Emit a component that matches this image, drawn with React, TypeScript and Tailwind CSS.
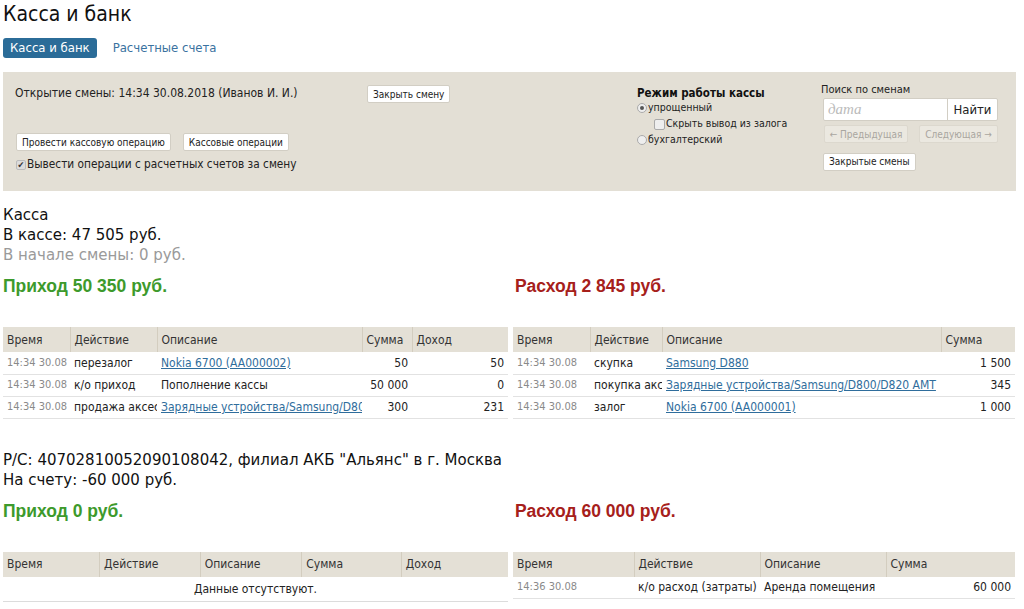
import React from "react";

const T = { fontFamily: '"DejaVu Sans Condensed", "DejaVu Sans", sans-serif' };
const V = { fontFamily: '"DejaVu Sans", Verdana, sans-serif' };
const A = { fontFamily: '"Liberation Sans", Arial, sans-serif' };

type Cell = { text: string; link?: boolean; right?: boolean; time?: boolean };

function DataTable({ widths, headers, rows, empty }: { widths: number[]; headers: string[]; rows: Cell[][]; empty?: string }) {
  return (
    <table className="table-fixed border-collapse w-full text-[12px] text-[#222]" style={T}>
      <colgroup>
        {widths.map((w, i) => (
          <col key={i} style={{ width: w }} />
        ))}
      </colgroup>
      <thead>
        <tr className="bg-[#e4e0d6] h-[25px]">
          {headers.map((h, i) => (
            <th
              key={i}
              className={`text-left font-normal px-[4px] text-[#333] whitespace-nowrap overflow-hidden ${i > 0 ? "border-l border-[#d3cdbf]" : ""}`}
            >
              {h}
            </th>
          ))}
        </tr>
      </thead>
      <tbody>
        {empty ? (
          <tr className="h-[25px] border-b border-[#dcdcdc]">
            <td colSpan={headers.length} className="text-center text-[#222]">
              {empty}
            </td>
          </tr>
        ) : (
          rows.map((r, ri) => (
            <tr key={ri} className="h-[22px] border-b border-[#e2e2e2]">
              {r.map((c, ci) => (
                <td
                  key={ci}
                  className={`px-[4px] whitespace-nowrap overflow-hidden text-clip ${c.right ? "text-right" : "text-left"} ${c.time ? "text-[11px] text-[#8a8a8a]" : ""}`}
                >
                  {c.link ? <span className="text-[#2f6d9c] underline">{c.text}</span> : c.text}
                </td>
              ))}
            </tr>
          ))
        )}
      </tbody>
    </table>
  );
}

function Btn({ children, disabled, className = "" }: { children: React.ReactNode; disabled?: boolean; className?: string }) {
  return (
    <span
      className={`inline-flex items-center justify-center whitespace-nowrap h-[18px] px-[5px] rounded-[2px] border text-[10px] ${disabled ? "bg-[#ebe8e0] border-[#dcd8ce] text-[#a9a69f]" : "bg-white border-[#d2cec4] text-[#222]"} ${className}`}
      style={T}
    >
      {children}
    </span>
  );
}

export default function App() {
  return (
    <div className="w-[1024px] h-[609px] overflow-hidden bg-white pl-[3px] pr-[8px] text-[#111]" style={V}>
      <div className="text-[21px] leading-[28px] h-[30px] text-[#111]" style={T}>
        Касса и банк
      </div>
      <div className="flex items-center mt-[8px] h-[20px]">
        <span className="h-[20px] px-[7px] rounded-[3px] bg-[#2b6c98] text-white text-[13px] leading-[20px] whitespace-nowrap" style={T}>
          Касса и банк
        </span>
        <span className="ml-[16px] text-[13px] text-[#3a72a0] whitespace-nowrap" style={T}>
          Расчетные счета
        </span>
      </div>

      <div className="mt-[14px] h-[119px] bg-[#e3dfd5] flex pl-[12px] pt-[14px]" style={T}>
        <div className="w-[622px] flex flex-col">
          <div className="flex items-start h-[20px]">
            <span className="w-[352px] text-[12px] text-[#222] leading-[14px] whitespace-nowrap">Открытие смены: 14:34 30.08.2018 (Иванов И. И.)</span>
            <Btn className="-mt-[1px]">Закрыть смену</Btn>
          </div>
          <div className="flex mt-[27px] ml-[1px] gap-[12px]">
            <Btn>Провести кассовую операцию</Btn>
            <Btn>Кассовые операции</Btn>
          </div>
          <div className="flex items-center mt-[6px] text-[11.75px] text-[#222] h-[16px] whitespace-nowrap">
            <span className="w-[10px] h-[10px] mr-[1px] ml-[1px] bg-[#dcdcdc] border border-[#bbb] rounded-[2px] flex items-center justify-center text-[9px] leading-none text-[#333]">
              ✔
            </span>
            Вывести операции с расчетных счетов за смену
          </div>
        </div>

        <div className="w-[184px] flex flex-col text-[10.5px] text-[#222] whitespace-nowrap">
          <div className="text-[11.5px] font-bold leading-[14px] text-[#111]">Режим работы кассы</div>
          <div className="flex items-center h-[16px]">
            <span className="w-[10px] h-[10px] rounded-full border border-[#aaa] bg-[#eee] flex items-center justify-center mr-[1px]">
              <span className="w-[4px] h-[4px] rounded-full bg-[#555]" />
            </span>
            упрощенный
          </div>
          <div className="flex items-center h-[16px] pl-[17px]">
            <span className="w-[11px] h-[11px] rounded-[2px] border border-[#aaa] bg-[#eee] mr-[1px]" />
            Скрыть вывод из залога
          </div>
          <div className="flex items-center h-[16px]">
            <span className="w-[10px] h-[10px] rounded-full border border-[#aaa] bg-[#eee] mr-[1px]" />
            бухгалтерский
          </div>
        </div>

        <div className="w-[178px] flex flex-col -mt-[3px]">
          <div className="text-[11px] text-[#222] leading-[13px] whitespace-nowrap">Поиск по сменам</div>
          <div className="flex ml-[2px] mt-[2px] h-[23px] w-[175px] border border-[#d2cec4] rounded-[2px] bg-white overflow-hidden">
            <span className="flex-1 flex items-center pl-[4px] text-[15px] italic text-[#bbb]" style={{ fontFamily: '"Liberation Serif", serif' }}>
              дата
            </span>
            <span className="w-[50px] border-l border-[#d2cec4] flex items-center justify-center text-[13px] text-[#222]">Найти</span>
          </div>
          <div className="flex ml-[3px] mt-[4px] gap-[11px]">
            <Btn disabled className="w-[84px]">← Предыдущая</Btn>
            <Btn disabled className="w-[79px]">Следующая →</Btn>
          </div>
          <div className="ml-[2px] mt-[5px]">
            <Btn>Закрытые смены</Btn>
          </div>
        </div>
      </div>

      <div className="mt-[14px] text-[15px] leading-[20px]">Касса</div>
      <div className="text-[15px] leading-[20px]">В кассе: 47 505 руб.</div>
      <div className="text-[15px] leading-[20px] text-[#9a9a9a]">В начале смены: 0 руб.</div>

      <div className="grid grid-cols-[505px_502px] gap-x-[5px] mt-[10px]">
        <div>
          <div className="text-[17.5px] font-bold text-[#3d9a2c] leading-[22px]" style={A}>Приход 50 350 руб.</div>
          <div className="mt-[30px]">
            <DataTable
              widths={[67, 87, 205, 50, 96]}
              headers={["Время", "Действие", "Описание", "Сумма", "Доход"]}
              rows={[
                [{ text: "14:34 30.08", time: true }, { text: "перезалог" }, { text: "Nokia 6700 (AA000002)", link: true }, { text: "50", right: true }, { text: "50", right: true }],
                [{ text: "14:34 30.08", time: true }, { text: "к/о приход" }, { text: "Пополнение кассы" }, { text: "50 000", right: true }, { text: "0", right: true }],
                [{ text: "14:34 30.08", time: true }, { text: "продажа аксессуаров" }, { text: "Зарядные устройства/Samsung/D800/D820 AMT", link: true }, { text: "300", right: true }, { text: "231", right: true }],
              ]}
            />
          </div>
        </div>
        <div>
          <div className="pl-[2px] text-[17.5px] font-bold text-[#a6201b] leading-[22px]" style={A}>Расход 2 845 руб.</div>
          <div className="mt-[30px]">
            <DataTable
              widths={[77, 72, 279, 74]}
              headers={["Время", "Действие", "Описание", "Сумма"]}
              rows={[
                [{ text: "14:34 30.08", time: true }, { text: "скупка" }, { text: "Samsung D880", link: true }, { text: "1 500", right: true }],
                [{ text: "14:34 30.08", time: true }, { text: "покупка аксессуаров" }, { text: "Зарядные устройства/Samsung/D800/D820 AMT", link: true }, { text: "345", right: true }],
                [{ text: "14:34 30.08", time: true }, { text: "залог" }, { text: "Nokia 6700 (AA000001)", link: true }, { text: "1 000", right: true }],
              ]}
            />
          </div>
        </div>
      </div>

      <div className="mt-[31px] text-[15px] leading-[20px] whitespace-nowrap">Р/С: 40702810052090108042, филиал АКБ "Альянс" в г. Москва</div>
      <div className="text-[15px] leading-[20px]">На счету: -60 000 руб.</div>

      <div className="grid grid-cols-[505px_502px] gap-x-[5px] mt-[10px]">
        <div>
          <div className="text-[17.5px] font-bold text-[#3d9a2c] leading-[22px]" style={A}>Приход 0 руб.</div>
          <div className="mt-[30px]">
            <DataTable widths={[96, 100, 101, 99, 106]} headers={["Время", "Действие", "Описание", "Сумма", "Доход"]} rows={[]} empty="Данные отсутствуют." />
          </div>
        </div>
        <div>
          <div className="pl-[2px] text-[17.5px] font-bold text-[#a6201b] leading-[22px]" style={A}>Расход 60 000 руб.</div>
          <div className="mt-[30px]">
            <DataTable
              widths={[121, 126, 126, 129]}
              headers={["Время", "Действие", "Описание", "Сумма"]}
              rows={[[{ text: "14:36 30.08", time: true }, { text: "к/о расход (затраты)" }, { text: "Аренда помещения" }, { text: "60 000", right: true }]]}
            />
          </div>
        </div>
      </div>
    </div>
  );
}
